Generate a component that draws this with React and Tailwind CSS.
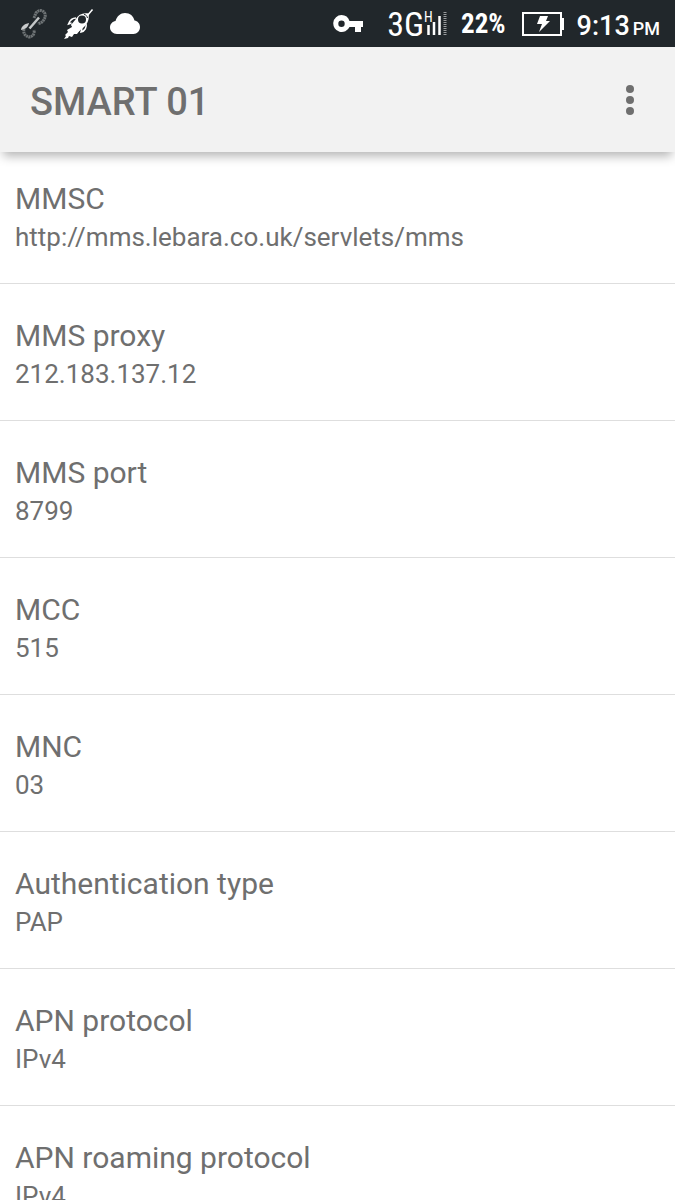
const settings = [
  { title: 'MMSC', value: 'http://mms.lebara.co.uk/servlets/mms' },
  { title: 'MMS proxy', value: '212.183.137.12' },
  { title: 'MMS port', value: '8799' },
  { title: 'MCC', value: '515' },
  { title: 'MNC', value: '03' },
  { title: 'Authentication type', value: 'PAP' },
  { title: 'APN protocol', value: 'IPv4' },
  { title: 'APN roaming protocol', value: 'IPv4' }
];

function LinkIcon() {
  return (
    <svg width="28" height="32" viewBox="0 0 28 32" fill="none" aria-hidden="true">
      <g stroke="#6f7476" strokeWidth="3">
        <path d="M14 10l2-5c3-4 8-3 9 1 1 3-1 6-3 8l-4 2" strokeDasharray="2 .5" />
        <path d="M4 21c-1 4 1 7 5 8 3 0 6-3 5-7" strokeDasharray="2 .5" />
      </g>
      <path d="M9.500 20.500L19 9.500" stroke="#c4c7c8" strokeWidth="2.500" />
      <path d="M1 22c0-3 3-6 8-7-1 4-3 6-8 7z" fill="#c9cbcc" />
    </svg>
  );
}

function RocketIcon() {
  return (
    <svg width="32" height="32" viewBox="0 0 32 32" aria-hidden="true">
      <path d="M29.500 1.500L24 8" stroke="#fff" strokeWidth="1.500" />
      <path d="M25.500 5.500c-6-1-10 1-13 6L8 17l7 7 6-5c4-4 5.500-8 4.500-13.500z" fill="#fff" />
      <path d="M13 10c-4 0-6 2-7.500 6l3-1M23 16c1 3-1 7-5 8l1-4" fill="none" stroke="#fff" strokeWidth="1.500" />
      <path d="M8 16l1 3-5 3 1 2-3 3 1 1-2 3 4-1 1-2 3 1 2-3h3l3-4z" fill="#fff" />
      <circle cx="19" cy="11.500" r="4" fill="#21272b" />
      <path d="M21 6.500c2 0 3 1.500 3.500 3.500" fill="none" stroke="#21272b" />
    </svg>
  );
}

function CloudIcon() {
  return (
    <svg width="30" height="21" viewBox="0 0 30 21" fill="#fff" aria-hidden="true">
      <path d="M7 21C3 21 0 18 0 14.500 0 11 2.500 8.500 5.500 8 7 3 10.500 0 15 0c5 0 8.500 3 9.500 7.500C27.500 8 30 10.500 30 14c0 4-3 7-6.500 7z" />
    </svg>
  );
}

function KeyIcon() {
  return (
    <svg width="30" height="18" viewBox="0 0 30 18" fill="#fff" aria-hidden="true">
      <path
        fillRule="evenodd"
        d="M8.500 0a8.500 8.500 0 0 1 8 6H30v6h-2v5h-6v-5h-5.500A8.500 8.500 0 1 1 8.500 0zm0 5.500a3.200 3.200 0 1 0 0 6.400 3.200 3.200 0 0 0 0-6.400z"
      />
    </svg>
  );
}

function Signal() {
  return (
    <span className="relative block h-[25px] w-6">
      <svg width="24" height="25" viewBox="0 0 24 25" aria-hidden="true">
        <path d="M4.500 14v10M10 11v13M15.500 5v19" stroke="#fff" strokeWidth="2.500" />
        <path d="M21 1v23" stroke="#999c9e" strokeWidth="3" strokeDasharray="1 1" />
      </svg>
      <span className="absolute top-0 left-0 font-['Roboto_Condensed',Roboto,sans-serif] text-sm leading-3">
        H
      </span>
    </span>
  );
}

function BatteryIcon() {
  return (
    <svg width="42" height="24" viewBox="0 0 42 24" aria-hidden="true">
      <path d="M1 1h38v22H1z" fill="none" stroke="#fff" strokeWidth="2" />
      <path d="M39 6h3v12h-3z" fill="#fff" />
      <path d="M18 4h8l-2 5h4L17 20l3-8h-5z" fill="#fff" />
    </svg>
  );
}

function StatusBar() {
  return (
    <div className="flex h-[47px] shrink-0 items-center justify-between bg-[#21272b] pr-[15px] pl-5 text-white">
      <div className="flex items-center gap-[15px]">
        <LinkIcon />
        <RocketIcon />
        <CloudIcon />
      </div>
      <div className="flex items-center">
        <KeyIcon />
        <div className="ml-6 flex items-center">
          <span className="font-['Roboto_Condensed',Roboto,sans-serif] text-[34px] leading-[46px]">
            3G
          </span>
          <Signal />
        </div>
        <span className="ml-[13px] font-['Roboto_Condensed',Roboto,sans-serif] text-[27px] leading-[46px] font-bold">
          22%
        </span>
        <span className="mr-[13px] ml-4">
          <BatteryIcon />
        </span>
        <div className="flex items-baseline gap-[3px] pt-1 font-medium">
          <span className="text-[27px] leading-[46px]">9:13</span>
          <span className="text-[18px]">PM</span>
        </div>
      </div>
    </div>
  );
}

function AppBar({ title }) {
  return (
    <header className="relative z-10 flex h-[105px] shrink-0 items-center justify-between bg-[#f2f2f2] px-[30px] shadow-[0_7px_10px_-3px_rgba(0,0,0,0.3)]">
      <h1 className="pt-1 text-[38px] leading-[46px] font-medium">{title}</h1>
      <button type="button" aria-label="More options" className="flex w-[30px] justify-center">
        <svg width="8" height="32" viewBox="0 0 8 32" fill="currentColor">
          <circle cx="4" cy="5" r="4" />
          <circle cx="4" cy="16" r="4" />
          <circle cx="4" cy="27" r="4" />
        </svg>
      </button>
    </header>
  );
}

function SettingRow({ title, value }) {
  return (
    <li className="shrink-0 border-b border-[#dedede] px-[15px] pt-[33px] pb-[27px]">
      <div className="text-[30px] leading-[38px]">{title}</div>
      <div className="text-[26px] leading-[38px]">{value}</div>
    </li>
  );
}

export default function App() {
  return (
    <div className="flex h-screen flex-col overflow-hidden bg-white font-[Roboto,sans-serif] text-[#6f6f6f]">
      <StatusBar />
      <AppBar title="SMART 01" />
      <ul className="-mt-[5px] flex min-h-0 flex-1 flex-col overflow-hidden">
        {settings.map((item) => (
          <SettingRow key={item.title} title={item.title} value={item.value} />
        ))}
      </ul>
    </div>
  );
}
